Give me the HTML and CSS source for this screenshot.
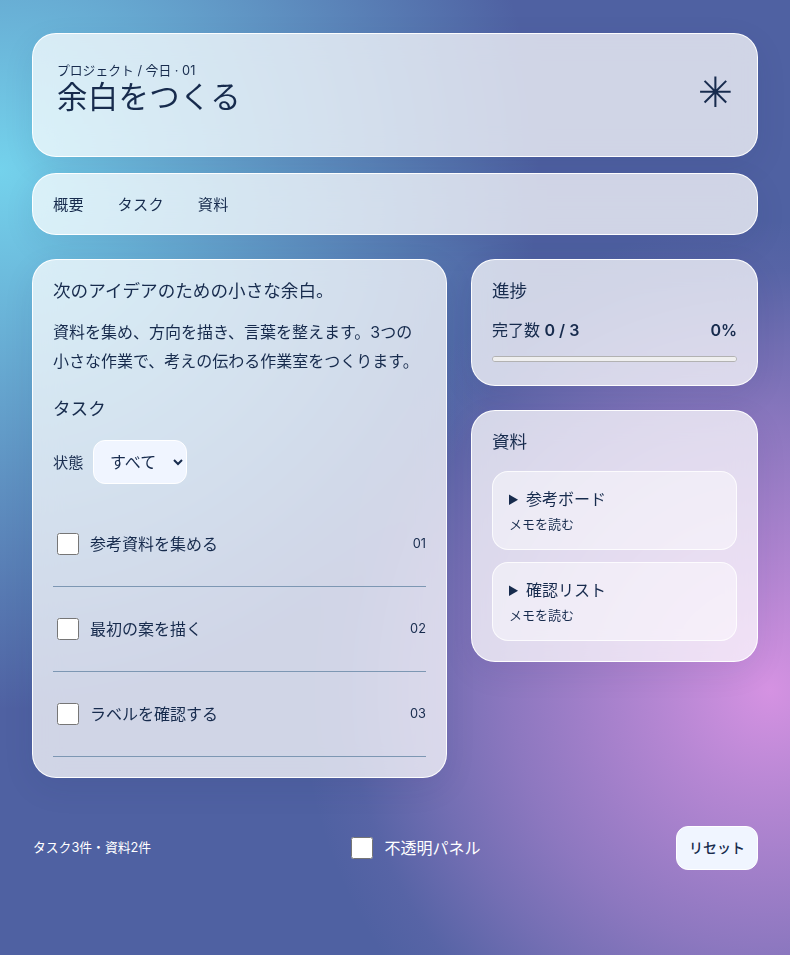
FILE: index.html
```html
<!DOCTYPE html>
<html lang="ja">
<head>
<meta charset="utf-8">
<title>余白をつくる</title>
<link rel="stylesheet" href="styles.css">
</head>
<body>
<div class="page">
  <header class="panel hero">
    <div>
      <p class="eyebrow">プロジェクト / 今日 · 01</p>
      <h1>余白をつくる</h1>
    </div>
    <span class="mark">✳</span>
  </header>
  <nav class="panel nav">
    <a href="#a">概要</a>
    <a href="#b">タスク</a>
    <a href="#c">資料</a>
  </nav>
  <main class="grid">
    <section class="panel main">
      <h2>次のアイデアのための小さな余白。</h2>
      <p class="lead">資料を集め、方向を描き、言葉を整えます。3つの小さな作業で、考えの伝わる作業室をつくります。</p>
      <h2 class="tasks">タスク</h2>
      <div class="filter">
        <label for="st">状態</label>
        <select id="st"><option>すべて</option></select>
      </div>
      <ul class="list">
        <li><input type="checkbox"><span class="name">参考資料を集める</span><span class="num">01</span></li>
        <li><input type="checkbox"><span class="name">最初の案を描く</span><span class="num">02</span></li>
        <li><input type="checkbox"><span class="name">ラベルを確認する</span><span class="num">03</span></li>
      </ul>
    </section>
    <aside class="side">
      <section class="panel card">
        <h2>進捗</h2>
        <div class="count"><span>完了数 <b>0 / 3</b></span><b>0%</b></div>
        <progress value="0" max="3"></progress>
      </section>
      <section class="panel card">
        <h2>資料</h2>
        <details class="doc"><summary>参考ボード<small>メモを読む</small></summary></details>
        <details class="doc"><summary>確認リスト<small>メモを読む</small></summary></details>
      </section>
    </aside>
  </main>
  <footer class="foot">
    <span class="stat">タスク3件・資料2件</span>
    <label class="opaque"><input type="checkbox"><span class="opaque-text">不透明パネル</span></label>
    <button type="button">リセット</button>
  </footer>
</div>
</body>
</html>
```
FILE: styles.css
```css
* { box-sizing: border-box; }
html, body { height: 100%; }
body {
  margin: 0;
  min-height: 955px;
  color: #172b4d;
  font-family: "Inter", "Noto Sans CJK JP", sans-serif;
  background:
    radial-gradient(circle at 770px 690px, #d592e2 0, rgba(213,146,226,.76) 110px, rgba(213,146,226,.46) 260px, rgba(213,146,226,.27) 340px, rgba(213,146,226,.06) 420px, rgba(213,146,226,0) 470px),
    radial-gradient(circle at 0 170px, #74d2ec 0, rgba(116,210,236,0) 540px),
    #4f61a2;
  overflow: hidden;
}
.page { padding: 33px 32px 0; }
.panel {
  background: rgba(255,255,255,.735);
  border: 1px solid rgba(255,255,255,.95);
  border-radius: 24px;
  box-shadow: 0 10px 32px rgba(30,40,90,.08);
  backdrop-filter: blur(14px);
}
.hero {
  height: 124px;
  padding: 28px 24px 0;
  display: flex;
  justify-content: space-between;
  align-items: flex-start;
}
.eyebrow { margin: 0; font-size: 12.8px; line-height: 17px; }
h1 { margin: 0; font-size: 30.4px; line-height: 36px; font-weight: 400; letter-spacing: .012em; }
.mark { font: 42px/46px "DejaVu Sans", sans-serif; margin: 8px 0 0; }
.nav {
  margin-top: 16px;
  height: 62px;
  padding: 0 20px 2px;
  display: flex;
  align-items: center;
  gap: 33.6px;
}
.nav a { color: inherit; text-decoration: none; font-size: 15.2px; letter-spacing: .02em; }
.grid {
  margin-top: 24px;
  display: grid;
  grid-template-columns: 415px 287px;
  gap: 24px;
  align-items: start;
}
.main { padding: 19px 20px 21px; height: 519px; }
h2 { margin: 0; font-size: 17.6px; line-height: 24px; font-weight: 400; }
.lead { margin: 15px 0 0; font-size: 16px; line-height: 29px; }
.tasks { margin-top: 21px; }
.filter { margin-top: 19px; display: flex; align-items: center; gap: 9.6px; font-size: 15.2px; }
.filter label { padding-bottom: 2px; }
select {
  width: 94px; height: 44px;
  padding: 0 12px;
  border: 1px solid #fff;
  border-radius: 12px;
  background: #f0f5ff;
  color: inherit;
  font: 16px "Inter", "Noto Sans CJK JP", sans-serif;
}
.list { list-style: none; margin: 18px 0 0; padding: 0; }
.list li {
  height: 85px;
  display: flex;
  align-items: center;
  border-bottom: 1px solid #7d97b3;
}
.list input { width: 22px; height: 22px; margin: 0 11px 0 4px; }
.name { flex: 1; font-size: 16px; padding-bottom: 2px; }
.num { font-size: 12.8px; padding-bottom: 2px; }
.side { display: flex; flex-direction: column; gap: 24px; }
.card { padding: 19px 20px 20px; }
.count { margin-top: 16px; display: flex; justify-content: space-between; font-size: 16px; line-height: 22px; }
b { font-weight: 600; }
progress {
  display: block;
  width: 100%; height: 6px;
  margin: 15px 0 3px;
  appearance: none;
  border: 1px solid #b2b2b2;
  border-radius: 4px;
  background: #efefef;
}
progress::-webkit-progress-bar { background: #efefef; border-radius: 4px; }
progress::-webkit-progress-value { background: #172b4d; }
.doc {
  margin-top: 12px;
  height: 79px;
  padding: 15px 16px;
  border: 1px solid rgba(255,255,255,.8);
  border-radius: 16px;
  background: rgba(255,255,255,.46);
}
.card h2 + .doc { margin-top: 17px; }
summary { font-size: 16px; line-height: 24px; }
small { display: block; font-size: 13px; line-height: 20px; margin-top: 3px; }
.foot {
  margin-top: 48px;
  display: flex;
  align-items: center;
  justify-content: space-between;
  color: #fff;
}
.stat { font-size: 12.8px; margin: -3px 0 0 1px; }
.opaque { display: flex; align-items: center; font-size: 16px; padding-left: 4px; }
.opaque input { width: 22px; height: 22px; margin: 0 12px 0 0; }
.opaque-text { padding-bottom: 2px; }
button {
  width: 82px; height: 44px;
  padding: 0 0 2px;
  border: 1px solid #fff;
  border-radius: 12px;
  background: #f0f5ff;
  color: #172b4d;
  font: 500 14px "Inter", "Noto Sans CJK JP", sans-serif;
}
```
